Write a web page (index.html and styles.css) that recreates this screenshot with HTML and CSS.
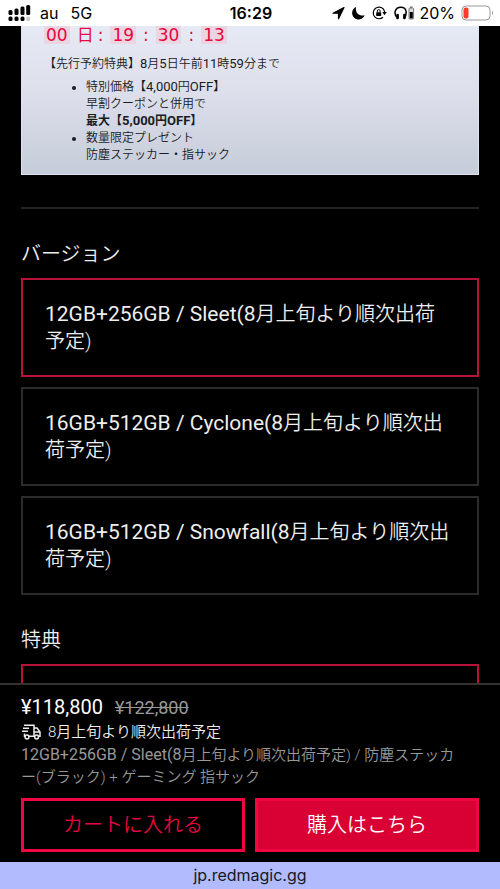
FILE: index.html
```html
<!DOCTYPE html>
<html lang="ja">
<head>
<meta charset="utf-8">
<meta name="viewport" content="width=device-width, initial-scale=1">
<title>REDMAGIC</title>
<link rel="stylesheet" href="styles.css">
</head>
<body>
<header class="status">
  <div class="status-left">
    <svg class="signal" width="24" height="18" viewBox="0 0 24 18" aria-hidden="true">
      <g fill="#000">
        <rect x="0.500" y="6" width="4" height="5" rx="1.500"/><rect x="6.500" y="4.500" width="4" height="6.500" rx="1.500"/><rect x="12.500" y="2.500" width="4" height="8.500" rx="1.500"/><rect x="18.200" y="1" width="4" height="10" rx="1.500"/>
        <rect x="0.500" y="12.500" width="4" height="4.500" rx="1.500"/><rect x="6.500" y="12.500" width="4" height="4.500" rx="1.500"/><rect x="12.500" y="12.500" width="4" height="4.500" rx="1.500"/>
      </g>
      <rect x="18.200" y="12.500" width="4" height="4.500" rx="1.500" fill="#ccc"/>
    </svg>
    <span>au</span><span>5G</span>
  </div>
  <time class="clock">16:29</time>
  <div class="status-right">
    <svg width="13" height="14" viewBox="0 0 13 14" aria-hidden="true"><path d="M12 1.500 1 7.200h5.500v5.500z" stroke="#000" stroke-width="1.200" stroke-linejoin="round"/></svg>
    <svg width="13" height="14" viewBox="0 0 13 14" aria-hidden="true"><path d="M4 1C3 6.500 7 10.500 12.700 9.300A6.500 6.500 0 1 1 4 1z"/></svg>
    <svg width="15" height="14" viewBox="0 0 15 14" aria-hidden="true"><path d="M11.500 3.200A5.800 5.800 0 1 0 11 11.200M12.300 8.500A5.800 5.800 0 0 0 11.500 3.200" fill="none" stroke="#000" stroke-width="1.200"/><path d="M10.300 6h4.500L12.500 9z"/><rect x="4.200" y="6.300" width="5" height="3.800" rx=".6"/><path d="M5.300 6.500V5a1.400 1.400 0 0 1 2.800 0v1.500" fill="none" stroke="#000"/></svg>
    <svg width="21" height="14" viewBox="0 0 21 14" aria-hidden="true"><path d="M3.600 12C-1 8 .8 1.200 7 1.200S13 8 10.400 12" fill="none" stroke="#000" stroke-width="1.500"/><rect x="2.300" y="7.700" width="2.600" height="5.600" rx="1"/><rect x="9.100" y="7.700" width="2.600" height="5.600" rx="1"/><rect x="15" y="2" width="4.600" height="11" rx="1" fill="#ddd" stroke="#777"/><rect x="16" y="0.500" width="2.600" height="1.500" fill="#777"/><rect x="15.800" y="6" width="3" height="6.300"/></svg>
    <span class="percent">20%<svg width="33" height="16" viewBox="0 0 33 16" aria-hidden="true"><rect x="1" y="1" width="28" height="14" rx="4" fill="#fff" stroke="#999"/><rect x="2.500" y="2.500" width="5" height="11" rx="2" fill="#ff3b30"/><path d="M31 5.500q2 2.500 0 5z" fill="#999"/></svg></span>
  </div>
</header>

<main class="page">
  <section class="promo">
    <div class="countdown"><b class="chip">00</b><span class="unit"><span>日</span><span>:</span></span><b class="chip">19</b><span>:</span><b class="chip">30</b><span>:</span><b class="chip">13</b></div>
    <p class="promo-title">【先行予約特典】<span class="latin">8</span>月<span class="latin">5</span>日午前<span class="latin">11</span>時<span class="latin">59</span>分まで</p>
    <ul class="promo-list">
      <li>特別価格【<span class="latin">4,000</span>円<span class="latin">OFF</span>】<br>早割クーポンと併用で<br><strong>最大【<span class="latin">5,000</span>円<span class="latin">OFF</span>】</strong></li>
      <li>数量限定プレゼント<br>防塵ステッカー・指サック</li>
    </ul>
  </section>
  <hr class="divider">
  <section class="group">
    <h2 class="group-title">バージョン</h2>
    <div class="options">
      <button type="button" class="option selected" aria-pressed="true"><span class="latin">12GB+256GB / Sleet(8</span>月上旬より順次出荷予定)</button>
      <button type="button" class="option" aria-pressed="false"><span class="latin">16GB+512GB / Cyclone(8</span>月上旬より順次出荷予定)</button>
      <button type="button" class="option" aria-pressed="false"><span class="latin">16GB+512GB / Snowfall(8</span>月上旬より順次出荷予定)</button>
    </div>
  </section>
  <section class="group">
    <h2 class="group-title">特典</h2>
    <div class="options"><div class="option selected"></div></div>
  </section>
</main>

<aside class="buybar">
  <div class="prices"><span class="price">¥118,800</span><s class="was">¥122,800</s></div>
  <div class="shipping">
    <svg width="20" height="16" viewBox="0 0 20 16" fill="none" stroke="#eee" stroke-width="1.500" aria-hidden="true"><path d="M3 1.300h10v11H8M2 4.300h6M1 7.300h6M3.500 9.500v2.800h1M13 4h3l3 4v4.300h-1M13 8h6"/><circle cx="6" cy="13" r="1.900"/><circle cx="15.600" cy="13" r="1.900"/></svg>
    <span>8月上旬より順次出荷予定</span>
  </div>
  <p class="summary"><span class="latin">12GB+256GB / Sleet(8</span>月上旬より順次出荷予定) / 防塵ステッカー(ブラック) + ゲーミング 指サック</p>
  <div class="actions">
    <button type="button" class="btn outline">カートに入れる</button>
    <button type="button" class="btn solid">購入はこちら</button>
  </div>
</aside>
<footer class="address">jp.redmagic.gg</footer>
</body>
</html>
```
FILE: styles.css
```css
* { box-sizing: border-box; }
body {
  margin: 0;
  height: 100vh;
  display: flex;
  flex-direction: column;
  background: #000;
  color: #eee;
  font-family: Roboto, "Noto Sans CJK JP", sans-serif;
  font-weight: 350;
}
button { font: inherit; color: inherit; border-radius: 0; }
.latin { font-weight: 400; line-height: 1; }
strong .latin { font-weight: 700; }
.status {
  flex: none;
  height: 26px;
  padding: 0 6px 0 8px;
  display: grid;
  grid-template-columns: 1fr auto 1fr;
  align-items: center;
  background: #fff;
  color: #000;
  font: 16px/26px Inter, sans-serif;
}
.status svg { display: block; }
.status-left, .status-right, .percent { display: flex; align-items: center; }
.status-left { gap: 12px; }
.status-left .signal { margin-right: -4px; }
.status-right { justify-content: flex-end; gap: 7px; }
.percent { gap: 6px; margin-left: -3px; }
.clock { font-weight: 600; }
.page {
  flex: 1;
  min-height: 0;
  overflow: hidden;
  padding: 0 21px;
}
.promo {
  padding: 0 22px 10px;
  border: 1px solid #dde3ec;
  border-top: 0;
  background: linear-gradient(#e6eaf5, #dddfeb 45%, #c6ccd9);
  color: #191b24;
  font-size: 12px;
  line-height: 17px;
}
.promo .latin { font-size: 13px; }
.countdown {
  display: flex;
  gap: 7px;
  color: #e5083f;
  font: 17px/18px "DejaVu Sans", "Noto Sans CJK JP", sans-serif;
}
.unit { display: flex; gap: 4px; }
.chip { padding: 0 2px; background: #ead5e1; font-weight: 400; }
.promo-title { margin: 12px 0 6px; }
.promo-list { margin: 0; padding-left: 42px; }
.divider { margin: 32px 0; border: 0; border-top: 2px solid #242424; }
.group-title { margin: 0 0 11px; font-size: 20px; line-height: 26px; font-weight: 350; }
.group { margin-bottom: 32px; }
.options { display: flex; flex-direction: column; gap: 10px; }
.option {
  min-height: 99px;
  padding: 20px 24px 20px 22px;
  border: 2px solid #2b2b2b;
  background: #000;
  font-size: 20px;
  line-height: 27px;
  text-align: left;
}
.option .latin { font-size: 21px; }
.option.selected { border-color: #b91238; }
.buybar { flex: none; padding: 10px 21px; border-top: 2px solid #333; }
.prices { display: flex; align-items: baseline; gap: 12px; line-height: 24px; font-weight: 400; }
.price { font-size: 20px; color: #fff; }
.was { font-size: 18px; color: #999; }
.shipping { display: flex; align-items: center; gap: 7px; font-size: 15px; line-height: 24px; }
.summary { margin: 0 0 10px; padding-right: 12px; font-size: 15px; line-height: 22px; color: #999; }
.summary .latin { font-size: 16px; }
.actions { display: grid; grid-template-columns: 1fr 1fr; gap: 10px; }
.btn { height: 54px; padding: 0 0 3px; border: 3px solid #f00640; font-size: 20px; font-weight: 350; }
.outline { background: #000; color: #e5083f; }
.solid { background: #d90034; color: #fff; }
.address {
  flex: none;
  background: #b3bbff;
  color: #151724;
  text-align: center;
  font: 16px/27px Inter, sans-serif;
}
```
